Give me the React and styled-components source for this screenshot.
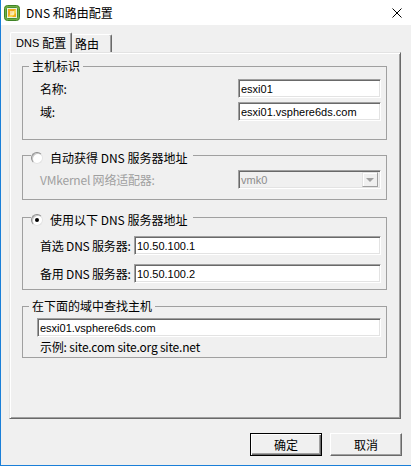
import React from 'react';
import styled, { createGlobalStyle } from 'styled-components';

const GlobalStyle = createGlobalStyle`
  html, body {
    margin: 0;
    padding: 0;
    background: #f0f0f0;
  }
  * {
    box-sizing: border-box;
  }
`;

const uiFont = `"Noto Sans CJK SC", "Liberation Sans", sans-serif`;
const boxFont = `"Liberation Sans", "Noto Sans CJK SC", sans-serif`;

const Window = styled.div`
  width: 411px;
  height: 466px;
  display: flex;
  flex-direction: column;
  border-left: 1px solid #1a7fd8;
  border-bottom: 1px solid #1a7fd8;
  background: #f0f0f0;
  font-family: ${uiFont};
  font-size: 12px;
  color: #000;
`;

const TitleBar = styled.div`
  height: 25px;
  flex: none;
  display: flex;
  align-items: center;
  gap: 6px;
  padding: 0 9px 0 3px;
  background: #fff;
`;

const Title = styled.span`
  font-size: 12px;
  line-height: 16px;
  flex: 1;
`;

const Body = styled.div`
  flex: 1;
  display: flex;
  flex-direction: column;
  padding: 7px 10px 0 8px;
`;

const Tabs = styled.div`
  display: flex;
  align-items: flex-end;
  height: 20px;
  padding-left: 1px;
`;

const Tab = styled.div`
  position: relative;
  z-index: ${p => (p.$active ? 1 : 0)};
  width: ${p => p.$w}px;
  height: ${p => (p.$active ? 21 : 18)}px;
  margin-bottom: ${p => (p.$active ? -1 : 0)}px;
  padding-left: ${p => (p.$active ? 5 : 2)}px;
  display: flex;
  align-items: center;
  gap: 3px;
  background: #f0f0f0;
  border-top: 1px solid #fff;
  border-left: 1px solid ${p => (p.$active ? '#fff' : '#f0f0f0')};
  border-right: 1px solid #696969;
  box-shadow: inset -1px 0 0 #a0a0a0;
  border-radius: 2px 2px 0 0;
  font-size: 12px;
  line-height: 16px;
`;

const TabLatin = styled.span`
  font-family: ${boxFont};
  font-size: 11px;
`;

const Panel = styled.div`
  width: 392px;
  height: 367px;
  flex: none;
  display: flex;
  flex-direction: column;
  padding: 5px 13px 0 12px;
  border: 1px solid;
  border-color: #e3e3e3 #696969 #696969 #e3e3e3;
  box-shadow: inset 1px 1px 0 #fff, inset -1px -1px 0 #a0a0a0;
`;

const Group = styled.fieldset`
  margin: ${p => p.$top}px 0 0 0;
  padding: 0;
  min-inline-size: auto;
  border: 1px solid #a0a0a0;
`;

const Legend = styled.legend`
  margin-left: ${p => p.$indent}px;
  padding: 0 ${p => p.$pad}px;
  height: 16px;
  line-height: 16px;
`;

const LegendInner = styled.span`
  display: inline-flex;
  align-items: center;
  gap: 7px;
  height: 16px;
  padding-right: 6px;
`;

const Radio = styled.span`
  width: 12px;
  height: 12px;
  flex: none;
  border-radius: 50%;
  background: #fff;
  border: 1px solid;
  border-color: #8d8d8d #e3e3e3 #e3e3e3 #8d8d8d;
  box-shadow: inset 1px 1px 0 #c8c8c8;
  display: flex;
  align-items: center;
  justify-content: center;

  &::after {
    content: '';
    width: 4px;
    height: 4px;
    border-radius: 50%;
    background: ${p => (p.$checked ? '#000' : 'transparent')};
  }
`;

const GroupBody = styled.div`
  display: flex;
  flex-direction: column;
  padding: ${p => p.$pad};
`;

const Field = styled.div`
  display: flex;
  align-items: center;
  height: 19px;
  margin-top: ${p => p.$gap || 0}px;
`;

const Label = styled.span`
  width: ${p => p.$w}px;
  flex: none;
  line-height: 16px;
  letter-spacing: -0.2px;
  white-space: nowrap;
  color: ${p => (p.$disabled ? '#a0a0a0' : '#000')};
`;

const TextBox = styled.input`
  width: ${p => p.$w}px;
  height: 19px;
  flex: none;
  margin: 0;
  padding: 0 0 0 2px;
  background: #fff;
  border: 1px solid;
  border-color: #a0a0a0 #fff #fff #a0a0a0;
  box-shadow: inset 1px 1px 0 #696969, inset -1px -1px 0 #e3e3e3;
  font-family: ${boxFont};
  font-size: 11px;
  color: #000;
  outline: none;
`;

const Select = styled.div`
  width: 143px;
  height: 19px;
  flex: none;
  display: flex;
  align-items: center;
  justify-content: space-between;
  padding: 0 2px;
  background: #f0f0f0;
  border: 1px solid;
  border-color: #a0a0a0 #fff #fff #a0a0a0;
  box-shadow: inset 1px 1px 0 #696969, inset -1px -1px 0 #e3e3e3;
  font-family: ${boxFont};
  font-size: 11px;
  color: #8d8d8d;
`;

const DropButton = styled.span`
  width: 16px;
  height: 15px;
  display: flex;
  align-items: center;
  justify-content: center;
  background: #f0f0f0;
  border: 1px solid;
  border-color: #e3e3e3 #a0a0a0 #a0a0a0 #e3e3e3;
  box-shadow: inset 1px 1px 0 #fff;

  &::after {
    content: '';
    border-left: 4px solid transparent;
    border-right: 4px solid transparent;
    border-top: 4px solid #a0a0a0;
  }
`;

const Example = styled.div`
  margin: 2px 0 0 3px;
  line-height: 16px;
  letter-spacing: -0.2px;
`;

const Buttons = styled.div`
  display: flex;
  justify-content: flex-end;
  gap: 8px;
  margin: 14px -1px 0 0;
`;

const Button = styled.button`
  width: 72px;
  height: 23px;
  margin: 0;
  padding: 0;
  background: #f0f0f0;
  font-family: ${uiFont};
  font-size: 12px;
  color: #000;
  border: 1px solid;
  border-color: ${p => (p.$default ? '#000' : '#fff #696969 #696969 #fff')};
  box-shadow: ${p =>
    p.$default
      ? 'inset 1px 1px 0 #fff, inset -1px -1px 0 #696969, inset -2px -2px 0 #a0a0a0'
      : 'inset -1px -1px 0 #a0a0a0'};
`;

const AppIcon = () => (
  <svg width="16" height="16" viewBox="0 0 16 16">
    <rect x="0.5" y="0.5" width="15" height="15" rx="3" fill="#72b043" stroke="#3f8226" />
    <rect x="2.5" y="2.5" width="11" height="11" rx="1" fill="#e9f3dc" stroke="#4c8f2f" />
    <rect x="4" y="4" width="8" height="8" fill="#f2a81d" />
    <path d="M4 12 L12 4 L12 8 L8 12 Z" fill="#fbd44a" />
    <rect x="6" y="6" width="4" height="4" fill="#fff" opacity="0.55" />
  </svg>
);

const CloseIcon = () => (
  <svg width="10" height="10" viewBox="0 0 10 10">
    <path d="M0.5 0.5 L9.5 9.5 M9.5 0.5 L0.5 9.5" stroke="#000" strokeWidth="1" />
  </svg>
);

export default function App() {
  return (
    <>
      <GlobalStyle />
      <Window>
        <TitleBar>
          <AppIcon />
          <Title>DNS 和路由配置</Title>
          <CloseIcon />
        </TitleBar>
        <Body>
          <Tabs>
            <Tab $active $w={62}>
              <TabLatin>DNS</TabLatin>配置
            </Tab>
            <Tab $w={40}>路由</Tab>
          </Tabs>
          <Panel>
            <Group $top={0}>
              <Legend $indent={6} $pad={3}>主机标识</Legend>
              <GroupBody $pad="5px 5px 18px 17px">
                <Field>
                  <Label $w={198}>名称:</Label>
                  <TextBox $w={143} readOnly value="esxi01" />
                </Field>
                <Field $gap={4}>
                  <Label $w={198}>域:</Label>
                  <TextBox $w={143} readOnly value="esxi01.vsphere6ds.com" />
                </Field>
              </GroupBody>
            </Group>

            <Group $top={7}>
              <Legend $indent={8} $pad={0}>
                <LegendInner>
                  <Radio />
                  自动获得 DNS 服务器地址
                </LegendInner>
              </Legend>
              <GroupBody $pad="7px 5px 10px 17px">
                <Field>
                  <Label $w={198} $disabled>VMkernel 网络适配器:</Label>
                  <Select>
                    vmk0
                    <DropButton />
                  </Select>
                </Field>
              </GroupBody>
            </Group>

            <Group $top={9}>
              <Legend $indent={8} $pad={0}>
                <LegendInner>
                  <Radio $checked />
                  使用以下 DNS 服务器地址
                </LegendInner>
              </Legend>
              <GroupBody $pad="11px 5px 6px 17px">
                <Field>
                  <Label $w={94}>首选 DNS 服务器:</Label>
                  <TextBox $w={247} readOnly value="10.50.100.1" />
                </Field>
                <Field $gap={9}>
                  <Label $w={94}>备用 DNS 服务器:</Label>
                  <TextBox $w={247} readOnly value="10.50.100.2" />
                </Field>
              </GroupBody>
            </Group>

            <Group $top={8}>
              <Legend $indent={6} $pad={3}>在下面的域中查找主机</Legend>
              <GroupBody $pad="4px 5px 2px 14px">
                <TextBox $w={344} readOnly value="esxi01.vsphere6ds.com" />
                <Example>示例: site.com site.org site.net</Example>
              </GroupBody>
            </Group>
          </Panel>
          <Buttons>
            <Button $default>确定</Button>
            <Button>取消</Button>
          </Buttons>
        </Body>
      </Window>
    </>
  );
}
